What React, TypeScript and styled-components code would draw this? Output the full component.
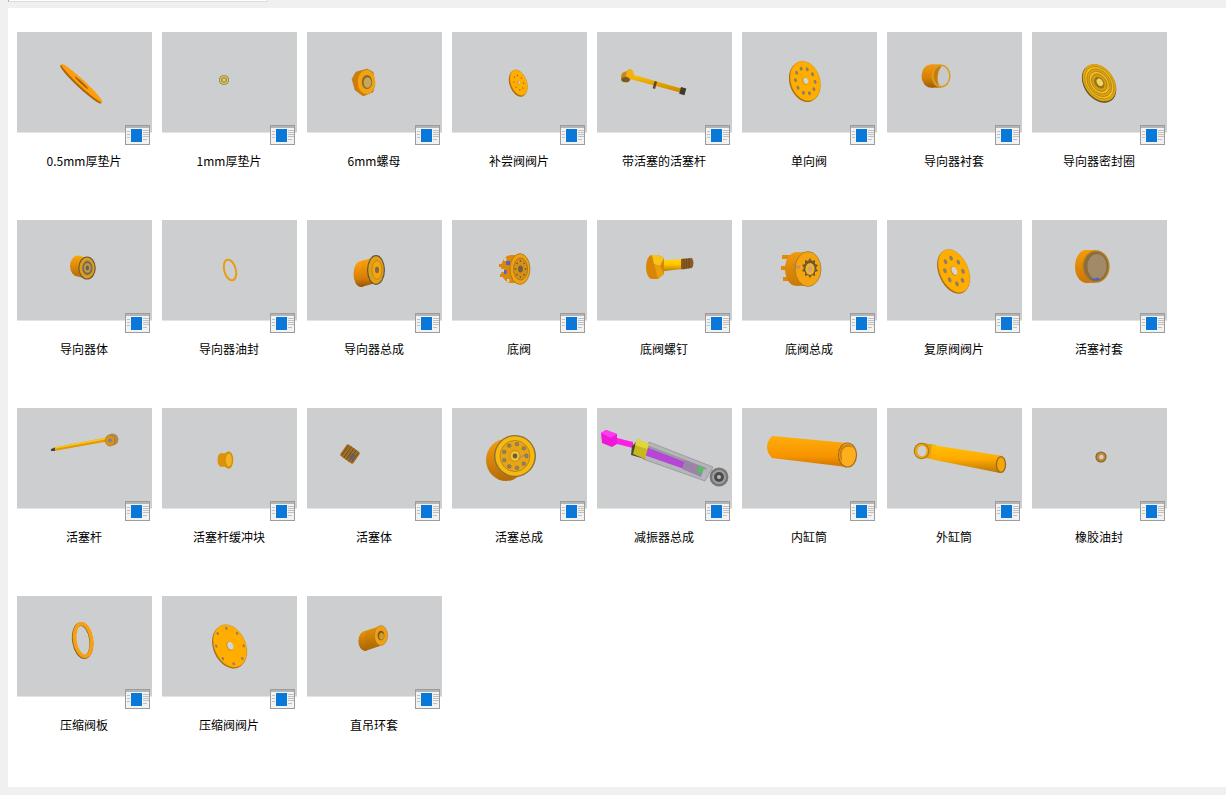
import React from "react";
import styled, { createGlobalStyle } from "styled-components";

const Global = createGlobalStyle`
  html, body { margin: 0; height: 100%; overflow: hidden; background: #f0f0f0; }
  #root { height: 100%; }
`;
const Page = styled.div`
  height: 795px;
  padding-left: 8px;
  box-sizing: border-box;
  display: flex;
  flex-direction: column;
`;
const TopStrip = styled.div`
  width: 258px;
  height: 1px;
  margin-bottom: 6px;
  background: #fff;
  border: 1px solid #dcdcdc;
  border-left-color: #a8a8a8;
  border-top: none;
`;
const Panel = styled.main`
  width: 1218px;
  height: 779px;
  padding: 24px 0 0 9px;
  box-sizing: border-box;
  background: #fff;
`;
const Grid = styled.div`
  display: grid;
  grid-template-columns: repeat(8, 135px);
  grid-auto-rows: 188px;
  column-gap: 10px;
`;
const Card = styled.figure`
  margin: 0;
  width: 135px;
  position: relative;
`;
const Thumb = styled.div`
  width: 135px;
  height: 100px;
  background: #cdced0;
  border-bottom: 1px solid #e4e4e4;
  svg { display: block; }
`;
const BadgeWrap = styled.div`
  position: absolute;
  left: 108px;
  top: 93px;
  width: 25px;
  height: 20px;
  svg { display: block; }
`;
const Label = styled.figcaption`
  margin-top: 19px;
  padding-right: 1px;
  text-align: center;
  font: 12px/18px "Noto Sans CJK SC", "Noto Sans", sans-serif;
  color: #000;
  white-space: nowrap;
`;

const DK = "#a86a10";

const Badge = () => (
  <svg width="25" height="20" viewBox="0 0 25 20">
    <rect x="0" y="0" width="25" height="20" fill="#9c9c9c" />
    <rect x="1" y="1" width="23" height="18" fill="#f2f2f2" />
    <rect x="1" y="1" width="23" height="2" fill="#b4b4b4" />
    <rect x="6" y="4" width="11" height="13" fill="#0a78d8" />
    <g fill="#c0c0c0">
      <rect x="2" y="6" width="3" height="1" />
      <rect x="2" y="9" width="3" height="1" />
      <rect x="2" y="12" width="3" height="1" />
      <rect x="18" y="5" width="6" height="1" />
      <rect x="18" y="7" width="6" height="1" />
      <rect x="18" y="9" width="6" height="1" />
      <rect x="18" y="11" width="6" height="1" />
      <rect x="18" y="14" width="4" height="1" />
    </g>
  </svg>
);

type DiscProps = { cx: number; cy: number; rx: number; ry: number; rot: number; holes: number; ringR: number; holeR: number; bore: number; hole?: string };
const Disc = ({ cx, cy, rx, ry, rot, holes, ringR, holeR, bore, hole = "#8d7f66" }: DiscProps) => (
  <g transform={`translate(${cx} ${cy}) rotate(${rot})`}>
    <ellipse cx={-1} cy={0.6} rx={rx} ry={ry} fill={DK} />
    <ellipse cx={0} cy={0} rx={rx - 0.4} ry={ry - 0.2} fill="#ffae00" stroke="#c98a20" strokeWidth="0.4" />
    {Array.from({ length: holes }).map((_, i) => {
      const a = (i / holes) * Math.PI * 2 + 0.3;
      return (
        <ellipse
          key={i}
          cx={Math.cos(a) * ringR * (rx / ry)}
          cy={Math.sin(a) * ringR}
          rx={holeR * (rx / ry)}
          ry={holeR}
          fill={hole}
        />
      );
    })}
    <ellipse cx={0} cy={0} rx={bore * (rx / ry)} ry={bore} fill="#b98a3c" />
    <ellipse cx={0.5} cy={0} rx={bore * (rx / ry) - 0.4} ry={bore - 0.5} fill="#d8d4cc" />
  </g>
);

type CylProps = { bx: number; by: number; fx: number; fy: number; rx: number; ry: number; fill: string };
const Cyl = ({ bx, by, fx, fy, rx, ry, fill }: CylProps) => (
  <g>
    <ellipse cx={bx} cy={by} rx={rx} ry={ry} fill={fill} />
    <path d={`M${bx} ${by - ry} L${fx} ${fy - ry} L${fx} ${fy + ry} L${bx} ${by + ry} Z`} fill={fill} />
  </g>
);

const Grad = ({ id, stops, x2 = 0, y2 = 1 }: { id: string; stops: [number, string][]; x2?: number; y2?: number }) => (
  <defs>
    <linearGradient id={id} x1="0" y1="0" x2={x2} y2={y2}>
      {stops.map(([o, c]) => (
        <stop key={o} offset={o} stopColor={c} />
      ))}
    </linearGradient>
  </defs>
);

const arts: Record<string, React.ReactNode> = {
  washer05: (
    <g transform="rotate(43 64.5 51.5)">
      <ellipse cx="64.5" cy="52.6" rx="28" ry="3.6" fill="#a8660c" />
      <ellipse cx="64.5" cy="51" rx="28" ry="3.2" fill="#ff9d0a" />
      <ellipse cx="64" cy="51" rx="9" ry="1" fill="#a06410" />
    </g>
  ),
  washer1: (
    <g>
      <circle cx="62" cy="48" r="5" fill="#7d7350" />
      <circle cx="62" cy="48" r="4.4" fill="#e3c63e" />
      <circle cx="62" cy="48" r="2.8" fill="#8d8358" />
      <circle cx="62" cy="48" r="1.8" fill="#d6c98c" />
    </g>
  ),
  nut: (
    <g>
      <path d="M49 40 L60 37 L66 40 L68 52 L66 60 L56 64 L48 58 L45 47 Z" fill="#cf7c08" stroke="#a86a10" strokeWidth="0.4" />
      <ellipse cx="59.5" cy="50" rx="8.8" ry="12" fill="#f2a40e" />
      <ellipse cx="60" cy="50" rx="5.2" ry="7" fill="#8a6a30" />
      <ellipse cx="60.5" cy="50.5" rx="3.8" ry="5.2" fill="#c8a858" />
    </g>
  ),
  comp: <Disc cx={66.7} cy={50.7} rx={8.4} ry={13.6} rot={-20} holes={8} ringR={7.4} holeR={0.8} bore={2} hole="#7a5a20" />,
  rodPiston: (
    <g>
      <Grad id="rp" stops={[[0, "#ffc400"], [1, "#cc8400"]]} />
      <path d="M34 42 L86 57 L85 61 L33 47 Z" fill="url(#rp)" />
      <rect x="56.5" y="49" width="2.6" height="7.5" transform="rotate(15 57 53)" fill="#5f4a20" />
      <rect x="83" y="55.5" width="5.5" height="7" transform="rotate(15 85 59)" fill="#3e3a2c" />
      <Cyl bx={29} by={45} fx={33} fy={42.5} rx={5} ry={5.6} fill="#c98810" />
      <ellipse cx="33" cy="42.5" rx="3.8" ry="5.4" fill="#f2b015" />
      <ellipse cx="28.5" cy="47.5" rx="4.2" ry="2.6" fill="#76582a" />
    </g>
  ),
  check: <Disc cx={63.3} cy={49} rx={15} ry={20.5} rot={-18} holes={10} ringR={13} holeR={2} bore={3.8} />,
  bush: (
    <g>
      <Grad id="bs" stops={[[0, "#f09a10"], [0.6, "#d57f06"], [1, "#9c5c08"]]} />
      <Cyl bx={44} by={44} fx={54} fy={44} rx={9.5} ry={11.6} fill="url(#bs)" />
      <ellipse cx="54" cy="44" rx="9.6" ry="11.6" fill="#dc9c18" />
      <ellipse cx="54.5" cy="44" rx="7.6" ry="10" fill="#c8c9cb" />
      <path d="M54.5 34 a7.6 10 0 0 0 -2.4 19.6 q-4 -10 2.4 -19.6 z" fill="#c97c0a" />
    </g>
  ),
  sealGuide: (
    <g transform="rotate(-35 67.3 50.7)">
      <ellipse cx="66.6" cy="51.3" rx="15" ry="21" fill="#5e4e24" />
      <ellipse cx="67.3" cy="50.7" rx="14.5" ry="20.4" fill="#e0a510" />
      <ellipse cx="67.3" cy="50.7" rx="12.6" ry="17.8" fill="#f5bc1c" stroke="#a17e18" strokeWidth="0.6" />
      <ellipse cx="67.3" cy="50.7" rx="10.8" ry="15.2" fill="#dfa210" stroke="#98771a" strokeWidth="0.6" />
      <ellipse cx="67.3" cy="50.7" rx="8.8" ry="12.4" fill="#f3be20" stroke="#98771a" strokeWidth="0.6" />
      <ellipse cx="67.3" cy="50.7" rx="6.8" ry="9.6" fill="#d89c10" stroke="#8b6e1a" strokeWidth="0.6" />
      <ellipse cx="67.3" cy="50.7" rx="4.6" ry="6.4" fill="#95741e" />
      <ellipse cx="68" cy="50.7" rx="2.8" ry="4" fill="#f0d45c" />
    </g>
  ),
  guideBody: (
    <g>
      <Grad id="gb" stops={[[0, "#ffa80a"], [1, "#b86c06"]]} />
      <Cyl bx={61} by={46} fx={68} fy={48} rx={8} ry={10.6} fill="url(#gb)" />
      <ellipse cx="70" cy="48" rx="8.8" ry="11.6" fill="#6d5a30" />
      <ellipse cx="70" cy="48" rx="7.6" ry="10.4" fill="#dc9c22" />
      <ellipse cx="70.4" cy="48" rx="5.2" ry="7.2" fill="#7d6c48" />
      <ellipse cx="70.4" cy="48" rx="3.4" ry="4.8" fill="#c09a50" />
      <ellipse cx="70.4" cy="48" rx="1.7" ry="2.4" fill="#6c6044" />
    </g>
  ),
  ring: (
    <g transform="rotate(-15 68 50)">
      <ellipse cx="68" cy="50" rx="5.8" ry="10.6" fill="none" stroke="#e99c14" strokeWidth="2" />
    </g>
  ),
  guideAsm: (
    <g>
      <Grad id="ga" stops={[[0, "#ffa50a"], [0.7, "#d97c04"], [1, "#8f5608"]]} />
      <Cyl bx={54} by={54} fx={69} fy={50} rx={7.5} ry={13} fill="url(#ga)" />
      <ellipse cx="69" cy="50" rx="9" ry="15" fill="#5f5436" />
      <ellipse cx="69" cy="50" rx="7.8" ry="13.8" fill="#e0a018" />
      <ellipse cx="70" cy="50" rx="5" ry="9.4" fill="#f5a60c" stroke="#8d6a20" strokeWidth="0.5" />
      <ellipse cx="70" cy="50" rx="2" ry="3.2" fill="#7d6a46" />
    </g>
  ),
  baseValve: (
    <g>
      <Cyl bx={59} by={49} fx={68} fy={49} rx={10} ry={14} fill="#dc880a" />
      <g fill="#d9880a">
        <rect x="47" y="44" width="5" height="3" />
        <rect x="48" y="54" width="5" height="3" />
      </g>
      <g fill="#cdced0">
        <rect x="52" y="38" width="2.4" height="3" />
        <rect x="49" y="49" width="3" height="3" />
        <rect x="55" y="59" width="2.4" height="3" />
      </g>
      <g fill="#4f66c8">
        <rect x="54" y="41" width="4" height="4" />
        <rect x="52" y="50" width="2.6" height="4" />
      </g>
      <ellipse cx="68" cy="49" rx="10" ry="15.4" fill="#f0a010" stroke="#8a6a20" strokeWidth="0.6" />
      <ellipse cx="68.5" cy="49" rx="7" ry="11" fill="#d89016" stroke="#7d6228" strokeWidth="0.6" />
      {[0, 1, 2, 3, 4, 5, 6, 7].map((i) => {
        const a = (i / 8) * Math.PI * 2;
        return <circle key={i} cx={68.5 + Math.cos(a) * 5} cy={49 + Math.sin(a) * 8} r="0.9" fill="#75603a" />;
      })}
      <ellipse cx="68.5" cy="49" rx="2.4" ry="3.6" fill="#6f6040" />
    </g>
  ),
  bolt: (
    <g>
      <Grad id="bt" stops={[[0, "#ffd900"], [0.45, "#ffc400"], [1, "#b87a04"]]} />
      <path d="M64 40.5 L85 39 L85 49 L64 51.5 Z" fill="url(#bt)" />
      <path d="M84 39 L95 38 Q98 43.5 95 48 L84 49.5 Z" fill="#8a5a20" />
      <g stroke="#5a3e18" strokeWidth="0.6">
        <path d="M87 38.5 V49.5 M89.5 38.5 V49 M92 38 V48.5" />
      </g>
      <ellipse cx="55" cy="47" rx="6" ry="12" fill="#d98606" />
      <path d="M55 35 L61 35 L67 38 L67 54 L61 59 L55 59 Z" fill="#d98606" />
      <path d="M55 35 L61 35 L67 38 L63 46 L57 44 Z" fill="#f8c418" />
      <path d="M57 44 L63 46 L67 54 L61 59 Z" fill="#e8a00c" />
    </g>
  ),
  baseAsm: (
    <g>
      <Grad id="bas" stops={[[0, "#f09a0c"], [1, "#c87806"]]} />
      <g fill="#e08a08">
        <rect x="40" y="35" width="10" height="4" />
        <rect x="39" y="46" width="10" height="4" />
        <rect x="41" y="57" width="10" height="4" />
      </g>
      <Cyl bx={54} by={49} fx={66} fy={49} rx={11} ry={16.8} fill="url(#bas)" />
      <ellipse cx="66" cy="49" rx="13" ry="17.5" fill="#f4a410" stroke="#8a6a20" strokeWidth="0.6" />
      <path d="M68 38 l2 3 3 -1 0 4 3 1 -2 3 2 3 -3 1 0 4 -3 -1 -2 3 -2 -3 -3 1 0 -4 -3 -1 2 -3 -2 -3 3 -1 0 -4 3 1 Z" fill="#6f5a30" />
      <ellipse cx="68" cy="49" rx="4.6" ry="6" fill="#f2b030" />
      <ellipse cx="68" cy="49" rx="2" ry="2.8" fill="#c6a870" />
      <path d="M50 44 L58 48 M52 50 L58 46" stroke="#7a78c0" strokeWidth="0.5" />
    </g>
  ),
  rebound: <Disc cx={67} cy={51} rx={14.5} ry={23} rot={-24} holes={8} ringR={13.5} holeR={2.6} bore={4.8} />,
  pistonBush: (
    <g>
      <Grad id="pb" stops={[[0, "#f59c0a"], [1, "#cc7508"]]} />
      <Cyl bx={54} by={46.5} fx={63} fy={46.5} rx={11} ry={16.4} fill="url(#pb)" />
      <ellipse cx="64" cy="46.5" rx="13.6" ry="16.2" fill="#b8801e" />
      <ellipse cx="64" cy="46.5" rx="12.2" ry="14.8" fill="#8c6c3c" />
      <ellipse cx="65" cy="46.5" rx="9.6" ry="12.6" fill="#a08a68" />
      <path d="M57 59 Q62 62 68 60 L66 57.6 Q61 59.6 57 59 Z" fill="#4c62c0" />
    </g>
  ),
  rod: (
    <g>
      <path d="M37 39.5 L90 29.5 L90 33.5 L37 43 Z" fill="#e09a04" />
      <path d="M37 39.5 L90 29.5 L90 31.2 L37 41 Z" fill="#ffc41c" />
      <path d="M34 41 L38 39.6 L38 43 L34 43 Z" fill="#444" />
      <circle cx="95.5" cy="31.5" r="6" fill="#b08a5a" />
      <ellipse cx="93" cy="32.5" rx="4.8" ry="5.6" fill="#d99512" stroke="#7d5f20" strokeWidth="0.4" />
      <circle cx="93" cy="32.5" r="2" fill="#8579a8" />
    </g>
  ),
  buffer: (
    <g>
      <Cyl bx={59} by={52} fx={66} fy={52} rx={3.5} ry={6.8} fill="#d99408" />
      <ellipse cx="66.5" cy="52" rx="4.8" ry="8.8" fill="#d6900c" />
      <ellipse cx="66.8" cy="52" rx="3" ry="6.4" fill="#f2b420" />
    </g>
  ),
  pistonBody: (
    <g transform="rotate(35 43 46)">
      <rect x="35" y="39" width="16" height="14" rx="2" fill="#a5701c" />
      <g stroke="#56482e" strokeWidth="0.8">
        <path d="M37 40 V52 M40 39 V53 M43 39 V53 M46 39 V53 M49 40 V52" />
      </g>
      <rect x="44" y="44" width="5" height="6" fill="#5a5a88" opacity="0.7" />
    </g>
  ),
  pistonAsm: (
    <g>
      <Grad id="pa" stops={[[0, "#f4a010"], [1, "#b56a08"]]} />
      <Cyl bx={54} by={52} fx={63} fy={48} rx={20} ry={21} fill="url(#pa)" />
      <ellipse cx="63" cy="48" rx="21" ry="21" fill="#8c7236" />
      <ellipse cx="63" cy="48" rx="19.6" ry="19.8" fill="#f7b810" />
      <ellipse cx="63" cy="48" rx="15" ry="15.6" fill="#e7a416" stroke="#7c6a30" strokeWidth="0.5" />
      {[0, 1, 2, 3, 4, 5, 6, 7, 8].map((i) => {
        const a = (i / 9) * Math.PI * 2;
        return <circle key={i} cx={63 + Math.cos(a) * 11.5} cy={48 + Math.sin(a) * 12} r="1.9" fill="#8d8168" stroke="#5f5230" strokeWidth="0.3" />;
      })}
      <ellipse cx="63" cy="48" rx="5" ry="5.4" fill="#f6c030" stroke="#6f5a28" strokeWidth="0.4" />
      <circle cx="63" cy="48" r="2.4" fill="#6a5c3c" />
      <path d="M66 51 L75 45" stroke="#6a78c8" strokeWidth="0.6" />
    </g>
  ),
  shock: (
    <g>
      <path d="M20 30 L36 34 L36 40 L20 36 Z" fill="#ff1ee6" />
      <path d="M4 25 L9 22 L20 26 L20 36 L15 39 L5 35 Z" fill="#ee18d6" />
      <path d="M4 25 L9 22 L20 26 L14 30 Z" fill="#ff3cf0" />
      <path d="M52 34 L116 59 L108 73 L46 51 Z" fill="#b6b6ba" stroke="#858589" strokeWidth="0.6" />
      <path d="M50 39 L92 55 L90 62 L47 47 Z" fill="#b646d6" />
      <path d="M50 37 L110 60 L109 62 L49 39 Z" fill="#9a9a9e" />
      <path d="M88 52 L107 60 L104 69 L85 61 Z" fill="#9c84a8" />
      <path d="M102 57.5 L107 60 L104.5 66 L100 63.5 Z" fill="#50c060" />
      <path d="M35 38 L41 32 L48 51 L34 47 Z" fill="#4a4a30" />
      <path d="M40 31 L52 36 L48 51 L36 46 Z" fill="#c8b820" />
      <path d="M40 31 L52 36 L50 41 L38 37 Z" fill="#e0d838" />
      <circle cx="122" cy="69" r="9.4" fill="#777" />
      <circle cx="122" cy="69" r="7" fill="#a0a0a0" />
      <circle cx="122" cy="69" r="5" fill="#4c4c4c" />
      <circle cx="122" cy="69" r="2" fill="#b8b8b8" />
    </g>
  ),
  innerTube: (
    <g>
      <Grad id="it" stops={[[0, "#ffad0a"], [0.65, "#f79400"], [1, "#ce7500"]]} />
      <path d="M30 28 L106 35 L105 59 L30 50 Q20 39 30 28 Z" fill="url(#it)" />
      <ellipse cx="105.5" cy="47" rx="9.6" ry="12.6" fill="#a06a20" />
      <ellipse cx="105.5" cy="47" rx="8.4" ry="11.4" fill="#ffae1c" />
      <path d="M97.5 47 a8 11 0 0 1 14 -7 q-7 -3 -10 1 q-3 3 -1 13 q-3 -3 -3 -7 z" fill="#cc8210" />
    </g>
  ),
  outerTube: (
    <g>
      <Grad id="ot" stops={[[0, "#ffc000"], [0.5, "#ffaa00"], [1, "#b87706"]]} />
      <path d="M36 35 L49 37 L46 51 L36 50 Z" fill="#e2a012" />
      <path d="M45 37 L116 48 L113 65 L43 51 Z" fill="url(#ot)" />
      <ellipse cx="114" cy="56.5" rx="5.2" ry="8.6" fill="#9c6a18" />
      <ellipse cx="114" cy="56.5" rx="3.9" ry="7.2" fill="#f2a60c" />
      <ellipse cx="34.5" cy="43" rx="7.8" ry="8.2" fill="#a67820" />
      <ellipse cx="34.5" cy="43" rx="6.8" ry="7.2" fill="#eea414" />
      <ellipse cx="35" cy="43" rx="4.6" ry="5.2" fill="#d0d0d0" />
    </g>
  ),
  rubber: (
    <g>
      <circle cx="69" cy="49" r="5.6" fill="#8c6326" />
      <circle cx="69" cy="49" r="4.4" fill="#bd8a3c" />
      <circle cx="69.4" cy="49" r="2.2" fill="#d4cfc4" />
    </g>
  ),
  compPlate: (
    <g transform="rotate(-8 66 44)">
      <ellipse cx="65.5" cy="44.5" rx="8.6" ry="16.6" fill="none" stroke="#8e6a2a" strokeWidth="3.8" />
      <ellipse cx="66.2" cy="44" rx="8.4" ry="16.4" fill="none" stroke="#f8a010" strokeWidth="3.6" />
    </g>
  ),
  compDisc: <Disc cx={68} cy={50} rx={16} ry={22.5} rot={-24} holes={8} ringR={18.5} holeR={1.6} bore={4.6} />,
  sleeve: (
    <g>
      <Grad id="sl" stops={[[0, "#e89408"], [1, "#a86404"]]} />
      <Cyl bx={58} by={45} fx={73} fy={40} rx={6.6} ry={10} fill="url(#sl)" />
      <ellipse cx="74" cy="39.5" rx="6.6" ry="10" fill="#f0a012" stroke="#8c6a20" strokeWidth="0.4" />
      <ellipse cx="74" cy="39.5" rx="3.4" ry="4.8" fill="#7d5a18" />
      <ellipse cx="74.6" cy="40.3" rx="2.4" ry="3.5" fill="#d49a2c" />
    </g>
  ),
};

const items: [string, string][] = [
  ["0.5mm厚垫片", "washer05"],
  ["1mm厚垫片", "washer1"],
  ["6mm螺母", "nut"],
  ["补尝阀阀片", "comp"],
  ["带活塞的活塞杆", "rodPiston"],
  ["单向阀", "check"],
  ["导向器衬套", "bush"],
  ["导向器密封圈", "sealGuide"],
  ["导向器体", "guideBody"],
  ["导向器油封", "ring"],
  ["导向器总成", "guideAsm"],
  ["底阀", "baseValve"],
  ["底阀螺钉", "bolt"],
  ["底阀总成", "baseAsm"],
  ["复原阀阀片", "rebound"],
  ["活塞衬套", "pistonBush"],
  ["活塞杆", "rod"],
  ["活塞杆缓冲块", "buffer"],
  ["活塞体", "pistonBody"],
  ["活塞总成", "pistonAsm"],
  ["减振器总成", "shock"],
  ["内缸筒", "innerTube"],
  ["外缸筒", "outerTube"],
  ["橡胶油封", "rubber"],
  ["压缩阀板", "compPlate"],
  ["压缩阀阀片", "compDisc"],
  ["直吊环套", "sleeve"],
];

export default function App() {
  return (
    <Page>
      <Global />
      <TopStrip />
      <Panel>
        <Grid>
          {items.map(([name, art]) => (
            <Card key={name}>
              <Thumb>
                <svg width="135" height="100" viewBox="0 0 135 100">
                  {arts[art]}
                </svg>
              </Thumb>
              <BadgeWrap>
                <Badge />
              </BadgeWrap>
              <Label>{name}</Label>
            </Card>
          ))}
        </Grid>
      </Panel>
    </Page>
  );
}
